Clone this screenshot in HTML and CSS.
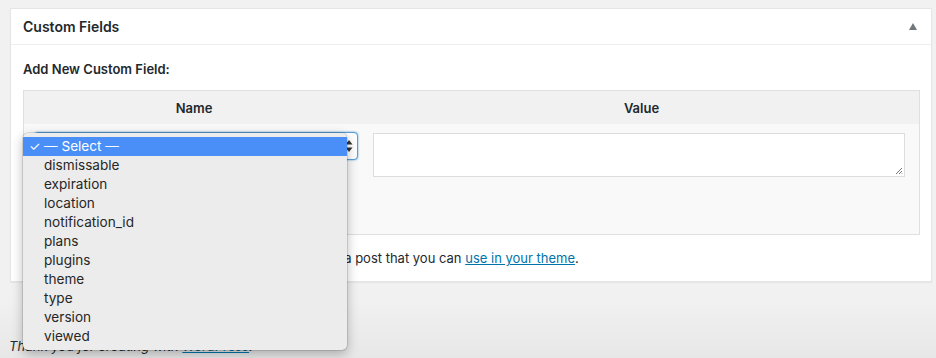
FILE: index.html
```html
<!DOCTYPE html>
<html lang="en">
<head>
<meta charset="utf-8">
<title>Custom Fields</title>
<link rel="stylesheet" href="styles.css">
</head>
<body>
<div class="wrap">
  <div class="postbox">
    <div class="hndle">
      <h2>Custom Fields</h2>
      <span class="toggle" aria-hidden="true"></span>
    </div>
    <div class="inside">
      <p class="addnew">Add New Custom Field:</p>
      <table class="newmeta">
        <thead>
          <tr><th class="c-name">Name</th><th class="c-value">Value</th></tr>
        </thead>
        <tbody>
          <tr>
            <td class="c-name">
              <div class="select">
                <span class="sel-text">— Select —</span>
                <svg class="sel-arrows" width="8" height="14" viewBox="0 0 8 14"><path d="M4 1 L7.5 5.5 H0.5 Z M4 13 L7.5 8.5 H0.5 Z" fill="#333"/></svg>
              </div>
              <div class="addbtn">Add Custom Field</div>
            </td>
            <td class="c-value">
              <div class="textarea"><svg class="grip" width="8" height="8" viewBox="0 0 8 8"><path d="M7 1 L1 7 M7 4 L4 7 M7 6.5 L6.5 7" stroke="#666" stroke-width="0.9"/></svg></div>
            </td>
          </tr>
        </tbody>
      </table>
      <p class="note">Custom fields can be used to add extra metadata to a post that you can <a href="#">use in your theme</a>.</p>
    </div>
  </div>
  <p class="footer">Thank you for creating with <a href="#">WordPress</a>.</p>
</div>

<ul class="popup">
  <li class="hl"><span class="check">✓</span>— Select —</li>
  <li>dismissable</li>
  <li>expiration</li>
  <li>location</li>
  <li>notification_id</li>
  <li>plans</li>
  <li>plugins</li>
  <li>theme</li>
  <li>type</li>
  <li>version</li>
  <li>viewed</li>
</ul>
</body>
</html>
```

FILE: styles.css
```css
html, body {
  margin: 0;
  padding: 0;
}
body {
  background: linear-gradient(#f1f1f1 0, #f1f1f1 300px, #e7e7e7 358px);
  min-height: 358px;
  font-family: Inter, "Noto Sans", Arial, sans-serif;
  color: #23282d;
  font-size: 13px;
  position: relative;
  overflow: hidden;
}
.wrap {
  padding: 8px 4px 0 10px;
}
.postbox {
  width: 920px;
  background: #fff;
  border: 1px solid #e5e5e5;
  box-shadow: 0 1px 1px rgba(0,0,0,.04);
}
.hndle {
  height: 35px;
  border-bottom: 1px solid #eee;
  display: flex;
  align-items: center;
  justify-content: space-between;
  padding: 0 12px;
}
.hndle h2 {
  margin: 0;
  font-size: 14px;
  font-weight: 600;
}
.toggle {
  width: 0;
  height: 0;
  border-left: 4.5px solid transparent;
  border-right: 4.5px solid transparent;
  border-bottom: 7px solid #72777c;
  margin-right: 2px;
  margin-top: -1px;
}
.inside {
  padding: 0 12px 0 12px;
}
.addnew {
  margin: 0;
  padding-top: 15px;
  line-height: 18px;
  font-weight: 600;
  font-size: 13px;
}
.newmeta {
  margin-top: 12px;
  width: 897px;
  border: 1px solid #dfdfdf;
  border-collapse: collapse;
  background: #f9f9f9;
}
.newmeta th {
  background: #f1f1f1;
  height: 33px;
  padding: 0;
  font-weight: 600;
  font-size: 13px;
  text-align: center;
}
.newmeta th.c-name { width: 340px; }
.newmeta td {
  vertical-align: top;
  padding: 9px 6px 0 10px;
  height: 101px;
}
.newmeta td.c-value { padding-left: 9px; padding-right: 14px; }
.select {
  height: 26px;
  border: 1px solid #5b9dd9;
  box-shadow: 0 0 2px rgba(30,140,190,.8);
  border-radius: 4px;
  background: #fff;
  display: flex;
  align-items: center;
  justify-content: space-between;
  padding: 0 4px 0 8px;
  margin-top: -1px;
}
.sel-arrows { display: block; }
.addbtn {
  margin-top: 12px;
  display: inline-block;
  border: 1px solid #ccc;
  border-radius: 3px;
  background: #f7f7f7;
  padding: 0 10px;
  line-height: 26px;
  font-size: 13px;
}
.textarea {
  height: 42px;
  border: 1px solid #ddd;
  background: #fff;
  position: relative;
}
.grip {
  position: absolute;
  right: 1px;
  bottom: 1px;
}
.note {
  margin: 0;
  padding: 14px 0 14px 0;
  line-height: 18px;
  font-size: 13px;
}
a {
  color: #0073aa;
  text-decoration: underline;
}
.footer {
  margin: 55px 0 0 -1px;
  font-style: italic;
  line-height: 18px;
  font-size: 13px;
}

.popup {
  position: absolute;
  left: 23px;
  top: 133px;
  width: 324px;
  margin: 0;
  padding: 4px 0;
  list-style: none;
  background: #ececec;
  border-radius: 5px;
  box-shadow: 0 0 0 0.5px rgba(0,0,0,.22), 0 4px 12px rgba(0,0,0,.28);
  font-size: 13.6px;
  color: #262626;
}
.popup li {
  height: 19px;
  line-height: 19px;
  padding-left: 21px;
  position: relative;
}
.popup li.hl {
  background: #4a8ff8;
  color: #fff;
}
.check {
  position: absolute;
  left: 6px;
  top: 0;
  font-size: 13px;
}
```
